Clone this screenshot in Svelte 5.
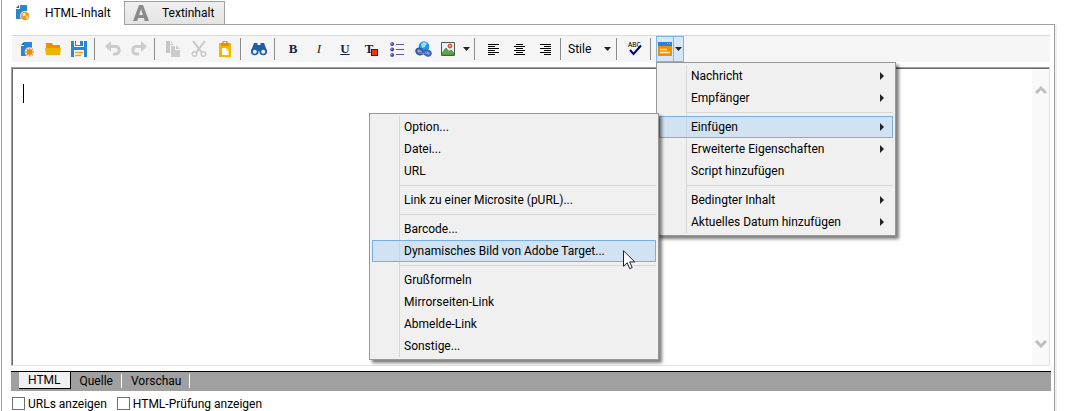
<script>
  const menu = [
    { label: 'Nachricht', sub: true },
    { label: 'Empfänger', sub: true },
    null,
    { label: 'Einfügen', sub: true, open: true },
    { label: 'Erweiterte Eigenschaften', sub: true },
    { label: 'Script hinzufügen' },
    null,
    { label: 'Bedingter Inhalt', sub: true },
    { label: 'Aktuelles Datum hinzufügen', sub: true }
  ];
  const insertMenu = [
    { label: 'Option...' },
    { label: 'Datei...' },
    { label: 'URL' },
    null,
    { label: 'Link zu einer Microsite (pURL)...' },
    null,
    { label: 'Barcode...' },
    { label: 'Dynamisches Bild von Adobe Target...', active: true },
    null,
    { label: 'Grußformeln' },
    { label: 'Mirrorseiten-Link' },
    { label: 'Abmelde-Link' },
    { label: 'Sonstige...' }
  ];
  const aligns = [
    { name: 'Linksbündig', rows: [[0, 11], [0, 7], [0, 11], [0, 7], [0, 11], [0, 7]] },
    { name: 'Zentriert', rows: [[2, 7], [0, 11], [2, 7], [0, 11], [2, 7], [0, 11]] },
    { name: 'Rechtsbündig', rows: [[0, 11], [4, 7], [0, 11], [4, 7], [0, 11], [4, 7]] }
  ];
</script>

{#snippet sep()}<span class="sep"></span>{/snippet}

{#snippet caret()}
  <svg class="caret" width="7" height="4" viewBox="0 0 7 4"><path d="M0 0H7L3.500 4Z" fill="#222" /></svg>
{/snippet}

<div class="page">
  <div class="tabs" role="tablist">
    <button class="tab current" role="tab" aria-selected="true">
      <svg width="14" height="18" viewBox="0 0 14 18">
        <path d="M4 1H11V15H0V5H4Z" fill="#2b85d4" /><path d="M0 4 3 1V4Z" fill="#1c5f9e" />
        <circle cx="9" cy="12" r="5" fill="#fff" /><circle cx="9" cy="12" r="4.300" fill="#f0961e" />
        <path d="M6 10 9 8.500 10 11 7.500 12.500ZM10.500 12 12.500 11.500 12 14 10 15ZM7 14H9" fill="#ffe2b8" />
      </svg>
      <span>HTML-Inhalt</span>
    </button>
    <button class="tab" role="tab" aria-selected="false">
      <svg width="16" height="16" viewBox="0 0 16 16">
        <path fill-rule="evenodd" d="M6 0H10L16 16H11.800L10.800 13H5.200L4.200 16H0ZM8 4 6.200 10H9.800Z" fill="#8b8b8b" />
      </svg>
      <span>Textinhalt</span>
    </button>
    <div class="rest"></div>
  </div>

  <div class="body">
    <div class="toolbar" role="toolbar" aria-label="Bearbeiten">
      <button aria-label="Neu">
        <svg width="14" height="16" viewBox="0 0 14 16">
          <path d="M4 1H12V15H1V5H4Z" fill="#2b85d4" /><path d="M1 4 4 1V4Z" fill="#1c5f9e" />
          <circle cx="9.500" cy="11" r="4.800" fill="#f5f5f5" />
          <path d="M9.500 6.500V15.500M5 11H14M6.300 7.800 12.700 14.200M12.700 7.800 6.300 14.200" stroke="#f39a2b" stroke-width="1.500" />
          <circle cx="9.500" cy="11" r="2.800" fill="#ee8a0c" />
        </svg>
      </button>
      <button aria-label="Öffnen">
        <svg width="16" height="14" viewBox="0 0 16 14">
          <path d="M1 1H7L8 3H15V6H1Z" fill="#ee8f00" /><path d="M0 6H16L15 13H1Z" fill="#edb500" />
        </svg>
      </button>
      <button aria-label="Speichern">
        <svg width="16" height="16" viewBox="0 0 16 16">
          <path d="M0 0H3V6H13V0H16V16H13V10H3V16H0Z" fill="#2b85d4" />
          <path d="M4 0H12V5H4Z" fill="#2b85d4" /><path d="M5 0H9V4H5Z" fill="#f5f5f5" />
          <path d="M3 9H13V16H3Z" fill="#fff" /><path d="M4 11.500H12M4 14.500H10" stroke="#f3951f" stroke-width="1.500" />
        </svg>
      </button>
      {@render sep()}
      <button aria-label="Rückgängig">
        <svg width="16" height="16" viewBox="0 0 16 16">
          <path d="M4 5.500H11A3.800 3.800 0 0 1 11 13H8" fill="none" stroke="#ccc" stroke-width="3" /><path d="M0 5.500 6 0V11Z" fill="#ccc" />
        </svg>
      </button>
      <button aria-label="Wiederholen">
        <svg width="16" height="16" viewBox="0 0 16 16">
          <path d="M12 5.500H5A3.800 3.800 0 0 0 5 13H8" fill="none" stroke="#ccc" stroke-width="3" /><path d="M16 5.500 10 0V11Z" fill="#ccc" />
        </svg>
      </button>
      {@render sep()}
      <button aria-label="Kopieren">
        <svg width="16" height="16" viewBox="0 0 16 16">
          <path d="M1 0H5V3H8V4H5V12H1Z" fill="#c6c6c6" /><path d="M6 5H10V9H15V16H6Z" fill="#cbcbcb" /><path d="M6 0 8 2.500H6ZM11 4 15 8H11Z" fill="#cbcbcb" />
        </svg>
      </button>
      <button aria-label="Ausschneiden">
        <svg width="16" height="16" viewBox="0 0 16 16">
          <path d="M2 0 10.500 11M14 0 5.500 11" stroke="#c8c8c8" stroke-width="2" />
          <circle cx="3.500" cy="13" r="2.200" fill="none" stroke="#c8c8c8" stroke-width="1.400" /><circle cx="12.500" cy="13" r="2.200" fill="none" stroke="#c8c8c8" stroke-width="1.400" />
        </svg>
      </button>
      <button aria-label="Einsetzen">
        <svg width="12" height="16" viewBox="0 0 12 16">
          <path d="M0 2H12V16H0Z" fill="#f0b800" /><path d="M2 2H10V5H2Z" fill="#ee8a00" /><path d="M4 3V1.500A2 1.500 0 0 1 8 1.500V3" fill="none" stroke="#ee8a00" stroke-width="1.400" />
          <path d="M3 7H7V9.500H9.500V14H3Z" fill="#fff" /><path d="M7.500 7 9.500 9H7.500Z" fill="#fff" />
        </svg>
      </button>
      {@render sep()}
      <button aria-label="Suchen">
        <svg width="16" height="14" viewBox="0 0 16 14">
          <path d="M3 1H6.500V3H9.500V1H13L16 9H0Z" fill="#1d5fa8" />
          <circle cx="3.800" cy="9.500" r="3.800" fill="#1d5fa8" /><circle cx="12.200" cy="9.500" r="3.800" fill="#1d5fa8" />
          <circle cx="3.800" cy="9.700" r="2" fill="#f5f5f5" /><circle cx="12.200" cy="9.700" r="2" fill="#f5f5f5" /><path d="M7.300 0H8.700V3H7.300Z" fill="#f5f5f5" />
        </svg>
      </button>
      {@render sep()}
      <button class="glyph">B</button>
      <button class="glyph"><i>I</i></button>
      <button class="glyph"><u>U</u></button>
      <button class="glyph color" aria-label="Textfarbe">T<span class="swatch"></span></button>
      <button aria-label="Liste">
        <svg width="14" height="15" viewBox="0 0 14 15">
          {#each [2, 7.5, 13] as y}
            <circle cx="2.200" cy={y} r="2" fill="#4a4ab4" /><circle cx="1.700" cy={y - 0.6} r="0.700" fill="#a8a8ec" />
          {/each}
          <path d="M6 2.500H14M6 7.500H14M6 12.500H14" stroke="#5c5ca0" />
        </svg>
      </button>
      <button aria-label="Verknüpfung">
        <svg width="17" height="16" viewBox="0 0 17 16">
          <circle cx="9" cy="5.500" r="5.300" fill="#2293e8" /><path d="M6 3Q8 0 12 2L10 6 7 7Z" fill="#9bdcff" />
          <ellipse cx="4.500" cy="10.500" rx="3.500" ry="2.800" transform="rotate(35 4.500 10.500)" fill="#8ba6dc" stroke="#32539a" stroke-width="2" />
          <ellipse cx="12.500" cy="12" rx="3.400" ry="2.500" transform="rotate(25 12.500 12)" fill="#8ba6dc" stroke="#3d62ae" stroke-width="2" />
          <path d="M4 11Q8 14 12 11" fill="none" stroke="#5f7fc2" stroke-width="2" />
        </svg>
      </button>
      <button class="wide" aria-label="Bild">
        <svg width="14" height="14" viewBox="0 0 14 14">
          <path d="M.5 .5H13.500V13.500H.5Z" fill="#e4f1fb" stroke="#4a5a4a" />
          <path d="M1 13V11L5 6 8 9.500 10 8 13 11V13Z" fill="#5fa548" stroke="#35702d" stroke-width=".6" /><circle cx="9" cy="4" r="1.900" fill="#f6a04c" stroke="#d9331d" />
        </svg>
        {@render caret()}
      </button>
      {@render sep()}
      {#each aligns as a}
        <button aria-label={a.name}>
          <svg width="11" height="11" viewBox="0 0 11 11" shape-rendering="crispEdges">
            {#each a.rows as [x, w], i}<rect {x} y={i * 2} width={w} height="1" fill="#000" />{/each}
          </svg>
        </button>
      {/each}
      {@render sep()}
      <button class="style">Stile {@render caret()}</button>
      {@render sep()}
      <button aria-label="Rechtschreibung">
        <svg width="16" height="16" viewBox="0 0 16 16">
          <text x="1" y="6" class="abc">ABC</text>
          <path d="M3 9 6.500 13 14 4.500" fill="none" stroke="#000080" stroke-width="2" />
        </svg>
      </button>
      {@render sep()}
      <div class="split">
        <button class="main" aria-label="Personalisierung">
          <svg width="14" height="14" viewBox="0 0 14 14">
            <path d="M0 0H14V4H0Z" fill="#2b80d0" /><path d="M9 1.500H10M11 1.500H12" stroke="#8fc4f2" /><path d="M0 4H14V14H0Z" fill="#f09000" />
            <path d="M2 7.500H9M2 10.500H12" stroke="#ffe9bd" stroke-width="1.500" />
          </svg>
        </button>
        <button class="drop" aria-label="Menü">{@render caret()}</button>
        <div class="menu" role="menu">
          {#each menu as item}
            {#if item}
              <div class="slot">
                <button class="item" class:active={item.open} role="menuitem">
                  <span>{item.label}</span>
                  {#if item.sub}<svg width="4" height="8" viewBox="0 0 4 8"><path d="M0 0 4 4 0 8Z" fill="#222" /></svg>{/if}
                </button>
                {#if item.open}
                  <div class="menu sub" role="menu">
                    {#each insertMenu as entry}
                      {#if entry}
                        <div class="slot">
                          <button class="item" class:active={entry.active} role="menuitem"><span>{entry.label}</span></button>
                          {#if entry.active}
                            <svg class="pointer" width="13" height="20" viewBox="0 0 13 20">
                              <path d="M.5 .8V16.300L4.200 12.800 6.700 18.700 9.200 17.600 6.700 11.900H11.800Z" fill="#fff" stroke="#1c2030" />
                            </svg>
                          {/if}
                        </div>
                      {:else}<div class="rule"></div>{/if}
                    {/each}
                  </div>
                {/if}
              </div>
            {:else}<div class="rule"></div>{/if}
          {/each}
        </div>
      </div>
    </div>

    <div class="editor">
      <textarea aria-label="HTML-Inhalt"></textarea>
      <span class="cursor"></span>
      <div class="scroll">
        <svg width="12" height="10" viewBox="0 0 12 10"><path d="M1 8 6 3 11 8" fill="none" stroke="#bdbdbd" stroke-width="3" /></svg>
        <svg width="12" height="10" viewBox="0 0 12 10"><path d="M1 2 6 7 11 2" fill="none" stroke="#bdbdbd" stroke-width="3" /></svg>
      </div>
    </div>

    <div class="views" role="tablist">
      <button class="view on" role="tab" aria-selected="true">HTML</button>
      <button class="view" role="tab" aria-selected="false">Quelle</button>
      <button class="view" role="tab" aria-selected="false">Vorschau</button>
    </div>

    <div class="checks">
      <label><input type="checkbox" />URLs anzeigen</label>
      <label><input type="checkbox" />HTML-Prüfung anzeigen</label>
    </div>
  </div>
</div>

<style>
  :global(body) { margin: 0; background: #fff; }
  * { box-sizing: border-box; }
  .page {
    display: flex; flex-direction: column; min-height: 100vh;
    margin: 0 15px 0 1px; border-left: 1px solid #a0a0a0;
    font: 12px/16px "Segoe UI", Roboto, sans-serif; color: #000;
  }
  button { font: inherit; color: inherit; background: none; border: 0; padding: 0; margin: 0; }
  svg { display: block; flex: none; }

  .tabs { display: flex; height: 25px; }
  .tab { display: flex; align-items: center; gap: 13px; width: 101px; margin-top: 1px; padding: 0 0 0 8px; border: 1px solid #a0a0a0; background: linear-gradient(#f0f0f0, #e4e4e4); }
  .tab.current { width: 122px; gap: 15px; padding: 0 0 0 14px; border: 0; background: none; }
  .rest { flex: 1; border-bottom: 1px solid #a0a0a0; }

  .body { flex: 1; padding: 10px 3px 0 9px; border-right: 1px solid #a0a0a0; box-shadow: 2px 0 #f0f0f0; }
  .toolbar { display: flex; height: 27px; margin: 0 1px; padding-left: 2px; border-top: 1px solid #d9d9d9; background: #f5f5f5; }
  .toolbar > button { display: flex; align-items: center; justify-content: center; width: 26px; }
  .sep { width: 1px; margin: 2px 5px 2px 2px; background: #8c8c8c; }
  .toolbar > .wide { width: 36px; gap: 8px; padding-left: 2px; }
  .toolbar > .style { width: 48px; justify-content: space-between; padding: 0 3px 0 2px; }
  .toolbar > .glyph { font: bold 13px/16px "Liberation Serif", serif; color: #1b2340; }
  .glyph i { font-weight: normal; }
  .toolbar > .color { position: relative; padding-right: 4px; }
  .swatch { position: absolute; right: 6px; bottom: 6px; width: 7px; height: 7px; border: 1px solid #1b2340; background: #ff3000; }
  .abc { font: 7px "Liberation Mono", monospace; fill: #000; }

  .split { position: relative; display: flex; width: 28px; border: 1px solid #7eb4ea; background: #d5e7f8; }
  .split > button { display: flex; align-items: center; justify-content: center; }
  .main { width: 16px; }
  .drop { flex: 1; border-left: 1px solid #7eb4ea; }

  .menu {
    position: absolute; z-index: 2; top: 25px; left: -1px; width: 240px; padding: 2px;
    border: 1px solid #979797; box-shadow: 3px 3px 3px rgba(0, 0, 0, .5);
    background: linear-gradient(#d7d7d7, #d7d7d7) 29px 2px / 1px calc(100% - 4px) no-repeat #f0f0f0;
  }
  .menu.sub { top: -3px; left: auto; right: 100%; width: 290px; }
  .slot { position: relative; }
  .item { display: flex; align-items: center; justify-content: space-between; width: 100%; height: 22px; padding: 0 8px 0 31px; border: 1px solid transparent; white-space: nowrap; }
  .item.active { border-color: #78aee5; background: rgba(178, 214, 245, .5); }
  .rule { height: 1px; margin: 3px 0 3px 28px; background: #d7d7d7; }
  .pointer { position: absolute; right: 20px; top: 10px; z-index: 1; }

  .editor { position: relative; display: flex; height: 299px; margin: 5px 1px 5px 0; border: 1px solid #a0a0a0; border-right-color: #e3e3e3; border-bottom-color: #e3e3e3; }
  textarea { flex: 1; padding: 15px 10px; border: 0; border-top: 1px solid #696969; border-left: 1px solid #696969; background: #fff; resize: none; outline: 0; font: inherit; }
  .cursor { position: absolute; left: 11px; top: 16px; width: 1px; height: 19px; background: #000; }
  .scroll { display: flex; flex-direction: column; justify-content: space-between; align-items: center; width: 17px; padding: 16px 0; border-top: 1px solid #696969; background: #f9f9f9; }

  .views { display: flex; height: 20px; padding-left: 8px; border-top: 1px solid #000; background: #a0a0a0; }
  .view { position: relative; height: 16px; padding: 0 9px; margin-top: 1px; }
  .view:not(.on)::after { content: ""; position: absolute; right: 0; top: 1px; width: 1px; height: 14px; background: #fff; }
  .view.on { height: 17px; margin-top: 0; border-right: 1px solid #000; border-bottom: 1px solid #000; background: #f0f0f0; }

  .checks { display: flex; gap: 10px; padding: 5px 0 0 1px; height: 20px; }
  label { display: flex; align-items: center; gap: 3px; height: 15px; white-space: nowrap; }
  input { appearance: none; width: 13px; height: 13px; margin: 0; border: 1px solid #707070; background: #fff; }
</style>
